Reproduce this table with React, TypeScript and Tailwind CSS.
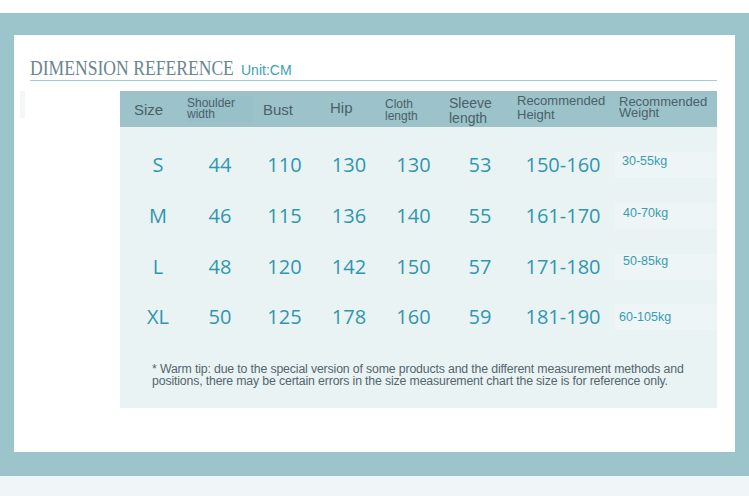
import React from 'react';

const cols = 'grid grid-cols-[69px_66px_65px_62px_63px_70px_100px_102px]';

const rows = [
  { size: 'S', sh: '44', bust: '110', hip: '130', cloth: '130', sleeve: '53', h: '150-160', w: '30-55kg', wy: '-translate-y-[4px]', wx: 'pl-[7px]' },
  { size: 'M', sh: '46', bust: '115', hip: '136', cloth: '140', sleeve: '55', h: '161-170', w: '40-70kg', wy: '-translate-y-[3px]', wx: 'pl-[8px]' },
  { size: 'L', sh: '48', bust: '120', hip: '142', cloth: '150', sleeve: '57', h: '171-180', w: '50-85kg', wy: '-translate-y-[5px]', wx: 'pl-[8px]' },
  { size: 'XL', sh: '50', bust: '125', hip: '178', cloth: '160', sleeve: '59', h: '181-190', w: '60-105kg', wy: 'translate-y-0', wx: 'pl-[4px]' },
];

export default function App() {
  return (
    <div className="w-[749px] h-[496px] flex flex-col bg-white overflow-hidden font-['Liberation_Sans',Arial,sans-serif]">
      {/* top white strip */}
      <div className="h-[13px] bg-white shrink-0" />

      {/* teal frame */}
      <div className="bg-[#9bc4cb] pt-[22px] pl-[14px] pr-[14px] pb-[24px] shrink-0">
        <div className="bg-white h-[417px] flex flex-col pl-[16px] pr-[18px] relative">
          {/* title */}
          <div className="flex items-baseline h-[46px] pt-[22px] border-b border-[#9fcdd5]">
            <div className="w-[211px] shrink-0 whitespace-nowrap">
              <span className="font-['Liberation_Serif','Times_New_Roman',serif] text-[22px] leading-none text-[#6a868f] scale-x-[0.8] origin-left inline-block">
                DIMENSION REFERENCE
              </span>
            </div>
            <span className="text-[14px] leading-none text-[#3c9fb4]">Unit:CM</span>
          </div>

          {/* faint block on the left */}
          <div className="absolute left-[6px] top-[56px] w-[5px] h-[27px] bg-[#f5f7f7]" />

          {/* table */}
          <div className="ml-[90px] mt-[10px] w-[597px] flex flex-col">
            {/* header */}
            <div className={`${cols} h-[36px] bg-[#9cc3ca] text-[#4b6068] items-center`}>
              <div className="pl-[14px] text-[15px] leading-none pt-[1px]">Size</div>
              <div className="text-[12px] leading-[11px] bg-[#98c0c8] h-[26px] flex flex-col justify-center -translate-x-[2px]">
                <span>Shoulder</span>
                <span>width</span>
              </div>
              <div className="pl-[8px] text-[15px] leading-none pt-[1px]">Bust</div>
              <div className="pl-[10px] text-[15px] leading-none -mt-[4px]">Hip</div>
              <div className="pl-[3px] text-[12px] leading-[12px] pt-[1px]">
                <div>Cloth</div>
                <div>length</div>
              </div>
              <div className="pl-[4px] text-[14px] leading-[15px] pt-[3px]">
                <div>Sleeve</div>
                <div>length</div>
              </div>
              <div className="pl-[2px] text-[13px] leading-[14px] -mt-[2px]">
                <div>Recommended</div>
                <div>Height</div>
              </div>
              <div className="pl-[4px] text-[13px] leading-[11px] -mt-[5px]">
                <div>Recommended</div>
                <div>Weight</div>
              </div>
            </div>

            {/* body */}
            <div className="bg-[#eaf3f4] h-[281px] pt-[13px] flex flex-col">
              {rows.map((r) => (
                <div key={r.size} className={`${cols} h-[50.67px] items-center text-[#2f97ae] font-['Open_Sans',sans-serif] text-[20px] leading-none`}>
                  <div className="text-center pl-[7px]">{r.size}</div>
                  <div className="text-center -translate-x-[2px]">{r.sh}</div>
                  <div className="text-center -translate-x-[3px]">{r.bust}</div>
                  <div className="text-center -translate-x-[2px]">{r.hip}</div>
                  <div className="text-center">{r.cloth}</div>
                  <div className="text-center">{r.sleeve}</div>
                  <div className="text-center -translate-x-[2px]">{r.h}</div>
                  <div className={`h-[26px] flex items-center bg-[#edf5f6] font-['Liberation_Sans',Arial,sans-serif] text-[12.5px] text-[#3a9bb0] ${r.wx}`}>
                    <span className={`inline-block ${r.wy}`}>{r.w}</span>
                  </div>
                </div>
              ))}
              <p className="mt-[20px] pl-[32px] text-[12.3px] leading-[12px] text-[#52676d] tracking-[-0.15px] whitespace-nowrap">
                * Warm tip: due to the special version of some products and the different measurement methods and
                <br />
                positions, there may be certain errors in the size measurement chart the size is for reference only.
              </p>
            </div>
          </div>
        </div>
      </div>

      {/* bottom light strip */}
      <div className="flex-1 bg-[#eef6f7]" />
    </div>
  );
}
